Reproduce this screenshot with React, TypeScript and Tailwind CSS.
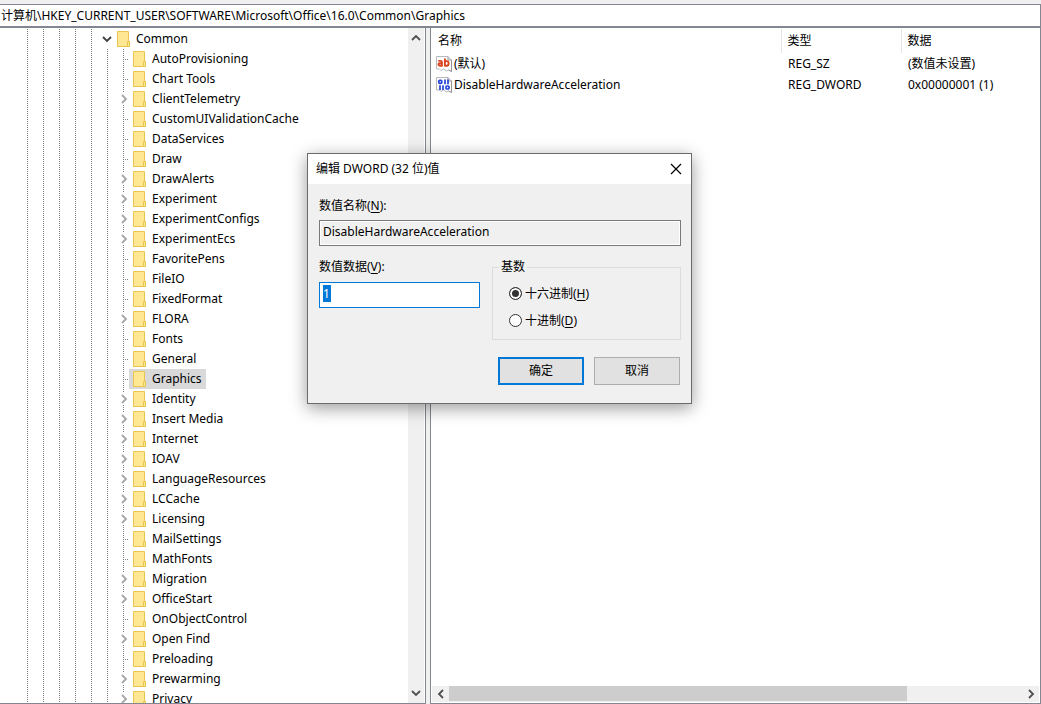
import React from "react";
import clsx from "clsx";

type TreeNode = { name: string; expandable?: boolean; selected?: boolean };

const nodes: TreeNode[] = [
  { name: "AutoProvisioning" },
  { name: "Chart Tools" },
  { name: "ClientTelemetry", expandable: true },
  { name: "CustomUIValidationCache" },
  { name: "DataServices" },
  { name: "Draw" },
  { name: "DrawAlerts", expandable: true },
  { name: "Experiment", expandable: true },
  { name: "ExperimentConfigs", expandable: true },
  { name: "ExperimentEcs", expandable: true },
  { name: "FavoritePens" },
  { name: "FileIO" },
  { name: "FixedFormat" },
  { name: "FLORA", expandable: true },
  { name: "Fonts" },
  { name: "General" },
  { name: "Graphics", selected: true },
  { name: "Identity", expandable: true },
  { name: "Insert Media", expandable: true },
  { name: "Internet", expandable: true },
  { name: "IOAV", expandable: true },
  { name: "LanguageResources", expandable: true },
  { name: "LCCache", expandable: true },
  { name: "Licensing", expandable: true },
  { name: "MailSettings" },
  { name: "MathFonts" },
  { name: "Migration", expandable: true },
  { name: "OfficeStart", expandable: true },
  { name: "OnObjectControl" },
  { name: "Open Find", expandable: true },
  { name: "Preloading" },
  { name: "Prewarming", expandable: true },
  { name: "Privacy", expandable: true },
];

const values = [
  { name: "(默认)", type: "REG_SZ", data: "(数值未设置)", icon: <StringIcon /> },
  {
    name: "DisableHardwareAcceleration",
    type: "REG_DWORD",
    data: "0x00000001 (1)",
    icon: <BinaryIcon />,
  },
];

function FolderIcon() {
  return (
    <svg width="14" height="16" viewBox="0 0 14 16" className="shrink-0" aria-hidden="true">
      <path d="M.5 .5h11v10h1v5H.5z" fill="#ffe794" stroke="#eac54f" />
      <path d="M10.5 15v-4.500h2v5h-2z" fill="#ffe794" stroke="#eac54f" />
    </svg>
  );
}

function ValuePage() {
  return (
    <>
      <path
        d="M.5 .5h11.5l3.500 3.500v11.500l-3-1.500-2 1-3-2-2.500 1.500-1.500-1.500h-3z"
        fill="#fff"
        stroke="#b9b9b9"
      />
      <path d="M12 .5v3.500h3.500v11.500l-3-1.500" fill="none" stroke="#959595" />
    </>
  );
}

function StringIcon() {
  return (
    <svg width="16" height="16" viewBox="0 0 16 16" className="shrink-0" aria-hidden="true">
      <ValuePage />
      <g fill="none" stroke="#d9431e" strokeWidth="1.9">
        <path d="M2.300 4.900h2.200q1.400 0 1.400 1.200v4.400M6 7.300H4q-1.600 0-1.600 1.200T4 9.700h2" />
        <path d="M8.900 2.500v8M8.900 5.100h1.800q1.900 0 1.900 2.300t-1.900 2.300h-1.800" />
      </g>
    </svg>
  );
}

function BinaryIcon() {
  return (
    <svg width="16" height="16" viewBox="0 0 16 16" className="shrink-0" aria-hidden="true">
      <ValuePage />
      <g fill="none" stroke="#2443d8" strokeWidth="1.7">
        <rect x="2.800" y="3.300" width="3" height="3" rx="1" />
        <path d="M9 2.500v4.700M12 2.500v4.700M4 8.200v4.700M7 8.200v4.700" />
        <rect x="10" y="9" width="3" height="3" rx="1" />
      </g>
    </svg>
  );
}

function Chevron({ dir, className }: { dir: "up" | "down" | "left" | "right"; className?: string }) {
  const paths = {
    up: "M1 7l4-4 4 4",
    down: "M1 3l4 4 4-4",
    left: "M7 1 3 5l4 4",
    right: "M3 1l4 4-4 4",
  };
  return (
    <svg width="10" height="10" viewBox="0 0 10 10" className={clsx("shrink-0", className)} aria-hidden="true">
      <path d={paths[dir]} fill="none" stroke="currentColor" strokeWidth="1.800" />
    </svg>
  );
}

function Dots({ className }: { className?: string }) {
  return (
    <span
      className={clsx(
        "w-px bg-[repeating-linear-gradient(to_bottom,#808080_0_1px,transparent_1px_2px)]",
        className,
      )}
    />
  );
}

function TreeItem({ node }: { node: TreeNode }) {
  return (
    <li className="flex h-5 items-center">
      {node.expandable ? (
        <button
          type="button"
          aria-label={`Expand ${node.name}`}
          className="flex h-5 w-[11px] shrink-0 flex-col items-center"
        >
          <Dots className="h-1" />
          <Chevron dir="right" className="my-px text-[#a6a6a6]" />
          <Dots className="h-1" />
        </button>
      ) : (
        <span className="flex h-5 w-[11px] shrink-0 items-center pl-[5px]">
          <Dots className="h-5" />
          <span className="h-px flex-1 bg-[repeating-linear-gradient(to_right,transparent_0_1px,#808080_1px_2px)]" />
        </span>
      )}
      <a
        href="#"
        className={clsx("flex h-5 items-center gap-[5px] pl-1 pr-1", node.selected && "bg-[#d9d9d9]")}
      >
        <FolderIcon />
        <span className="whitespace-nowrap">{node.name}</span>
      </a>
    </li>
  );
}

function Tree() {
  return (
    <nav className="flex min-w-0 flex-1 overflow-hidden pl-[27px] pt-px">
      <div className="flex shrink-0 gap-[15px]">
        <Dots />
        <Dots />
        <Dots />
        <Dots />
        <Dots />
      </div>
      <div className="flex flex-col pl-2">
        <div className="flex h-5 shrink-0 items-center">
          <button type="button" aria-label="Collapse Common" className="flex h-5 w-[13px] items-center justify-center">
            <Chevron dir="down" className="text-[#404040]" />
          </button>
          <a href="#" className="flex items-center gap-[5px] pl-1">
            <FolderIcon />
            <span>Common</span>
          </a>
        </div>
        <div className="flex pl-[7px]">
          <Dots />
          <ul className="pl-[10px]">
            {nodes.map((node) => (
              <TreeItem key={node.name} node={node} />
            ))}
          </ul>
        </div>
      </div>
    </nav>
  );
}

function ValueList() {
  return (
    <div className="flex min-w-0 flex-1 flex-col border-b border-l border-r border-[#828790] bg-white p-px">
      <div className="flex-1">
        <table className="w-full table-fixed text-left">
          <thead>
            <tr className="h-6">
              <th className="w-[349px] border-r border-[#e5e5e5] pl-[6px] font-normal">名称</th>
              <th className="w-30 border-r border-[#e5e5e5] pl-[6px] font-normal">类型</th>
              <th className="pl-[6px] font-normal">数据</th>
            </tr>
          </thead>
          <tbody>
            {values.map((v) => (
              <tr key={v.name} className="h-[21px]">
                <td className="pl-1">
                  <span className="flex items-center gap-[2px]">
                    {v.icon}
                    {v.name}
                  </span>
                </td>
                <td className="pl-[7px]">{v.type}</td>
                <td className="pl-[7px]">{v.data}</td>
              </tr>
            ))}
          </tbody>
        </table>
      </div>
      <div className="flex h-4 bg-[#f0f0f0] pb-px text-[#505050]">
        <button type="button" aria-label="Scroll left" className="flex w-[17px] items-center justify-center">
          <Chevron dir="left" />
        </button>
        <div className="flex flex-1">
          <div className="w-4/5 bg-[#cdcdcd]" />
        </div>
        <button type="button" aria-label="Scroll right" className="flex w-[17px] items-center justify-center">
          <Chevron dir="right" />
        </button>
      </div>
    </div>
  );
}

function EditDialog() {
  return (
    <div
      role="dialog"
      aria-labelledby="dialog-title"
      className="absolute left-[307px] top-[153px] w-[385px] border border-[#6b6b6b] bg-[#f0f0f0] shadow-[0_4px_16px_rgba(0,0,0,0.4)]"
    >
      <div className="flex h-[30px] items-center justify-between bg-white pl-2 pr-[9px]">
        <h2 id="dialog-title">编辑 DWORD (32 位)值</h2>
        <button type="button" aria-label="关闭" className="pb-px">
          <svg width="12" height="12" viewBox="0 0 12 12" className="block" aria-hidden="true">
            <path d="M1 1l10 10M11 1 1 11" stroke="#000" strokeWidth="1.200" />
          </svg>
        </button>
      </div>
      <form className="pb-[18px] pl-[11px] pr-[10px] pt-3">
        <label htmlFor="value-name" className="block h-5 leading-5">
          数值名称(<u className="underline-offset-2">N</u>):
        </label>
        <input
          id="value-name"
          readOnly
          value="DisableHardwareAcceleration"
          className="mt-1 block h-[26px] w-full border border-[#7a7a7a] px-[3px] pb-1 shadow-[inset_0_0_0_1px_#fff]"
        />
        <div className="mt-[11px] flex gap-3">
          <div className="w-[161px]">
            <label htmlFor="value-data" className="block h-5 leading-5">
              数值数据(<u className="underline-offset-2">V</u>):
            </label>
            <div className="mt-[5px] flex h-[26px] border border-[#0078d7] bg-white px-[3px] py-[2px]">
              <input
                id="value-data"
                defaultValue="1"
                className="h-[17px] w-2 bg-[#0078d7] text-white outline-none"
              />
            </div>
          </div>
          <fieldset className="h-[83px] flex-1 border border-[#dcdcdc] pl-4 pt-[3px]">
            <legend className="-ml-[10px] h-5 px-[2px] leading-5">基数</legend>
            <label className="flex h-[27px] items-center gap-[3px]">
              <Radio defaultChecked />
              <span>
                十六进制(<u className="underline-offset-2">H</u>)
              </span>
            </label>
            <label className="flex h-[27px] items-center gap-[3px]">
              <Radio />
              <span>
                十进制(<u className="underline-offset-2">D</u>)
              </span>
            </label>
          </fieldset>
        </div>
        <div className="mt-[17px] flex justify-end gap-[10px]">
          <button type="button" className="h-7 w-[86px] border-2 border-[#0078d7] bg-[#e1e1e1]">
            确定
          </button>
          <button type="button" className="mr-px h-7 w-[86px] border border-[#adadad] bg-[#e1e1e1]">
            取消
          </button>
        </div>
      </form>
    </div>
  );
}

function Radio({ defaultChecked }: { defaultChecked?: boolean }) {
  return (
    <input
      type="radio"
      name="base"
      defaultChecked={defaultChecked}
      className="size-[13px] appearance-none rounded-full border border-[#333] bg-white checked:bg-[#333] checked:shadow-[inset_0_0_0_2px_#fff]"
    />
  );
}

export default function App() {
  return (
    <div className="relative flex h-screen flex-col overflow-hidden bg-[#f0f0f0] pt-1 font-['Noto_Sans','Noto_Sans_CJK_SC',sans-serif] text-[12px] leading-4 text-black">
      <input
        aria-label="Address"
        defaultValue="计算机\HKEY_CURRENT_USER\SOFTWARE\Microsoft\Office\16.0\Common\Graphics"
        className="h-6 shrink-0 border-b-2 border-r border-t border-[#828790] bg-white pb-px pl-px outline-none"
      />
      <main className="flex min-h-0 flex-1 gap-1">
        <div className="flex w-[426px] shrink-0 border-b border-r border-[#828790] bg-white pr-px">
          <Tree />
          <div className="flex w-4 flex-col bg-[#f0f0f0] text-[#505050]">
            <button type="button" aria-label="Scroll up" className="flex h-5 items-center justify-center">
              <Chevron dir="up" />
            </button>
            <div className="flex-1" />
            <button type="button" aria-label="Scroll down" className="flex h-5 items-center justify-center">
              <Chevron dir="down" />
            </button>
          </div>
        </div>
        <ValueList />
      </main>
      <EditDialog />
    </div>
  );
}
